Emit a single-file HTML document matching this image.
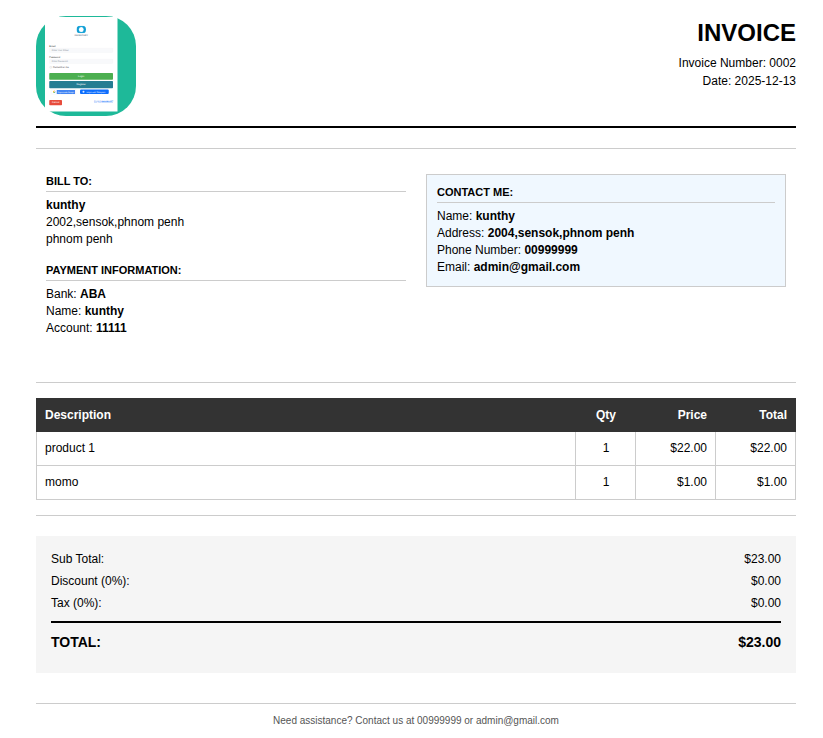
<!DOCTYPE html>
<html><head><meta charset="utf-8">
<style>
*{box-sizing:border-box;margin:0;padding:0}
html,body{width:823px;height:738px;background:#fff;overflow:hidden}
body{font-family:"Liberation Sans",sans-serif;color:#000;position:relative}
.abs{position:absolute}
.t{position:absolute;white-space:nowrap;line-height:1}
.r{text-align:right}
b{font-weight:bold}
.hl{position:absolute;height:1px;background:#ccc}
#card .m{position:absolute;white-space:nowrap;line-height:1}
#card .mi{position:absolute;left:17px;width:255px;height:18px;background:#f8f9fb;border:1px solid #eff1f4;border-radius:2px}
#card .mi span{position:absolute;left:9px;top:4px;font-size:9px;line-height:1;color:#7b8794;white-space:nowrap}
#card .mb{position:absolute;left:17px;width:255px;border-radius:3px;color:#fff;font-size:10px;text-align:center}
</style></head><body>
<!-- logo -->
<div class="abs" id="logo" style="left:36px;top:16px;width:100px;height:100px;border-radius:30px;background:#1eb999">
<div id="card" style="position:absolute;left:9px;top:1px;width:290px;height:378px;background:#fff;transform:scale(0.25);transform-origin:0 0;text-rendering:geometricPrecision;font-family:'Liberation Sans',sans-serif">
  <!-- brand icon -->
  <svg style="position:absolute;left:126px;top:35px" width="38" height="30" viewBox="0 0 38 30">
    <rect x="0" y="0" width="38" height="30" rx="14" ry="14" fill="#1ba6da"/>
    <ellipse cx="19" cy="15" rx="9.5" ry="10" fill="#fff"/>
    <path d="M8 4 Q2 15 8 26" stroke="#1192c9" stroke-width="2.5" fill="none"/>
    <path d="M30 4 Q36 15 30 26" stroke="#1192c9" stroke-width="2.5" fill="none"/>
  </svg>
  <div class="m" style="left:95px;width:100px;text-align:center;top:68px;font-size:9px;color:#66768a;font-weight:bold;letter-spacing:.2px">INVENTORY</div>
  <div class="m" style="left:17px;top:111px;font-size:10px;color:#333">Email</div>
  <div class="mi" style="top:124px"><span>Enter Your Email</span></div>
  <div class="m" style="left:17px;top:155px;font-size:10px;color:#333">Password</div>
  <div class="mi" style="top:168px"><span>Enter Password</span></div>
  <div style="position:absolute;left:19px;top:197px;width:8px;height:8px;border:1px solid #bbb;border-radius:1px;background:#fff"></div>
  <div class="m" style="left:32px;top:196px;font-size:9.5px;color:#444">Remember me</div>
  <div class="mb" style="top:224px;height:27px;background:#4caf50;line-height:27px">Login</div>
  <div class="mb" style="top:256px;height:29px;background:#257d93;line-height:29px">Register</div>
  <!-- social -->
  <div style="position:absolute;left:24px;top:289px;width:99px;height:20px;background:#fff;border:1px solid #e3e6ea;border-radius:2px"></div>
  <svg style="position:absolute;left:31px;top:293px" width="12" height="12" viewBox="0 0 12 12">
    <path d="M6 1 A5 5 0 0 1 10.3 3.5 L6 6 Z" fill="#ea4335"/>
    <path d="M10.3 3.5 A5 5 0 0 1 9.5 9.5 L6 6 Z" fill="#4285f4"/>
    <path d="M9.5 9.5 A5 5 0 0 1 2 9 L6 6 Z" fill="#34a853"/>
    <path d="M2 9 A5 5 0 0 1 6 1 L6 6 Z" fill="#fbbc05"/>
    <circle cx="6" cy="6" r="2.2" fill="#fff"/>
  </svg>
  <div style="position:absolute;left:47px;top:292px;width:73px;height:16px;background:#4285f4;color:#fff;font-size:7.5px;line-height:16px;text-align:center;white-space:nowrap">Sign in with Google</div>
  <div style="position:absolute;left:140px;top:290px;width:115px;height:18px;background:#0d6efd;border-radius:4px;color:#fff;font-size:8.5px;line-height:18px;text-align:center;white-space:nowrap;padding-left:12px">Login with Telegram</div>
  <div style="position:absolute;left:150px;top:295px;width:8px;height:8px;border-radius:4px;background:rgba(255,255,255,.85)"></div>
  <div style="position:absolute;left:17px;top:332px;width:51px;height:21px;background:#e74c3c;border-radius:3px;color:#fff;font-size:9.5px;line-height:21px;text-align:center">Cancel</div>
  <div class="m" style="left:196px;top:334px;font-size:9px;color:#3b82f6;text-decoration:underline">Forgot <b style="color:#0d6efd">password?</b></div>
</div>
</div>
<!-- header text -->
<div class="t r" style="right:27px;top:21px;font-size:24px;font-weight:bold">INVOICE</div>
<div class="t r" style="right:27px;top:57px;font-size:12px">Invoice Number: 0002</div>
<div class="t r" style="right:27px;top:75px;font-size:12px">Date: 2025-12-13</div>
<div class="abs" style="left:36px;top:126px;width:760px;height:2px;background:#000"></div>
<div class="hl" style="left:36px;top:148px;width:760px"></div>

<!-- bill to -->
<div class="t" style="left:46px;top:176px;font-size:11px;font-weight:bold">BILL TO:</div>
<div class="hl" style="left:46px;top:191px;width:360px"></div>
<div class="t" style="left:46px;top:199px;font-size:12px;font-weight:bold">kunthy</div>
<div class="t" style="left:46px;top:216px;font-size:12px">2002,sensok,phnom penh</div>
<div class="t" style="left:46px;top:233px;font-size:12px">phnom penh</div>
<div class="t" style="left:46px;top:265px;font-size:11px;font-weight:bold">PAYMENT INFORMATION:</div>
<div class="hl" style="left:46px;top:280px;width:360px"></div>
<div class="t" style="left:46px;top:288px;font-size:12px">Bank: <b>ABA</b></div>
<div class="t" style="left:46px;top:305px;font-size:12px">Name: <b>kunthy</b></div>
<div class="t" style="left:46px;top:322px;font-size:12px">Account: <b>11111</b></div>

<!-- contact -->
<div class="abs" style="left:426px;top:174px;width:360px;height:113px;background:#f0f8ff;border:1px solid #ccc"></div>
<div class="t" style="left:437px;top:187px;font-size:11px;font-weight:bold">CONTACT ME:</div>
<div class="hl" style="left:437px;top:202px;width:338px"></div>
<div class="t" style="left:437px;top:210px;font-size:12px">Name: <b>kunthy</b></div>
<div class="t" style="left:437px;top:227px;font-size:12px">Address: <b>2004,sensok,phnom penh</b></div>
<div class="t" style="left:437px;top:244px;font-size:12px">Phone Number: <b>00999999</b></div>
<div class="t" style="left:437px;top:261px;font-size:12px">Email: <b>admin@gmail.com</b></div>

<div class="hl" style="left:36px;top:382px;width:760px"></div>

<!-- table -->
<div class="abs" style="left:36px;top:398px;width:760px;height:34px;background:#333"></div>
<div class="abs" style="left:36px;top:432px;width:760px;height:68px;border:1px solid #ccc;border-top:none"></div>
<div class="hl" style="left:36px;top:465px;width:760px"></div>
<div class="abs" style="left:575px;top:432px;width:1px;height:68px;background:#ccc"></div>
<div class="abs" style="left:635px;top:432px;width:1px;height:68px;background:#ccc"></div>
<div class="abs" style="left:715px;top:432px;width:1px;height:68px;background:#ccc"></div>
<div class="t" style="left:45px;top:409px;font-size:12px;font-weight:bold;color:#fff">Description</div>
<div class="t" style="left:576px;width:60px;text-align:center;top:409px;font-size:12px;font-weight:bold;color:#fff">Qty</div>
<div class="t r" style="right:116px;top:409px;font-size:12px;font-weight:bold;color:#fff">Price</div>
<div class="t r" style="right:36px;top:409px;font-size:12px;font-weight:bold;color:#fff">Total</div>
<div class="t" style="left:45px;top:442px;font-size:12px">product 1</div>
<div class="t" style="left:576px;width:60px;text-align:center;top:442px;font-size:12px">1</div>
<div class="t r" style="right:116px;top:442px;font-size:12px">$22.00</div>
<div class="t r" style="right:36px;top:442px;font-size:12px">$22.00</div>
<div class="t" style="left:45px;top:476px;font-size:12px">momo</div>
<div class="t" style="left:576px;width:60px;text-align:center;top:476px;font-size:12px">1</div>
<div class="t r" style="right:116px;top:476px;font-size:12px">$1.00</div>
<div class="t r" style="right:36px;top:476px;font-size:12px">$1.00</div>

<div class="hl" style="left:36px;top:515px;width:760px"></div>

<!-- totals -->
<div class="abs" style="left:36px;top:536px;width:760px;height:137px;background:#f5f5f5"></div>
<div class="t" style="left:51px;top:553px;font-size:12px">Sub Total:</div>
<div class="t r" style="right:42px;top:553px;font-size:12px">$23.00</div>
<div class="t" style="left:51px;top:575px;font-size:12px">Discount (0%):</div>
<div class="t r" style="right:42px;top:575px;font-size:12px">$0.00</div>
<div class="t" style="left:51px;top:597px;font-size:12px">Tax (0%):</div>
<div class="t r" style="right:42px;top:597px;font-size:12px">$0.00</div>
<div class="abs" style="left:51px;top:621px;width:730px;height:2px;background:#000"></div>
<div class="t" style="left:51px;top:635px;font-size:14px;font-weight:bold">TOTAL:</div>
<div class="t r" style="right:42px;top:635px;font-size:14px;font-weight:bold">$23.00</div>

<div class="hl" style="left:36px;top:703px;width:760px"></div>
<div class="t" style="left:36px;width:760px;text-align:center;top:716px;font-size:10px;color:#555">Need assistance? Contact us at 00999999 or admin@gmail.com</div>
</body></html>
